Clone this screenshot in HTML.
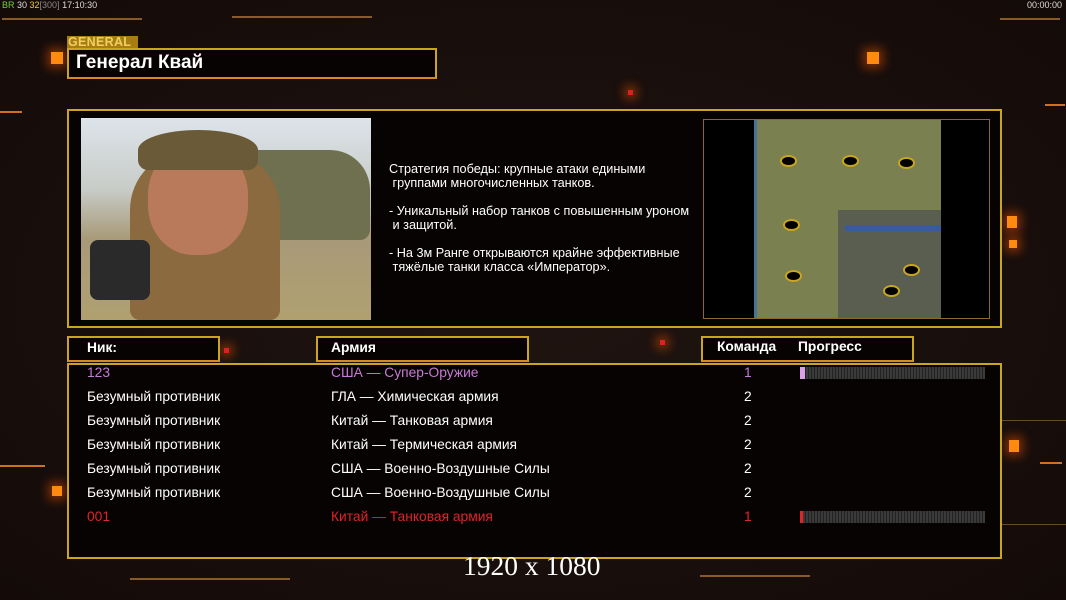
<!DOCTYPE html>
<html><head><meta charset="utf-8"><style>
*{margin:0;padding:0;box-sizing:border-box}
body{width:1066px;height:600px;overflow:hidden;background:#1b100d;font-family:"Liberation Sans",sans-serif;color:#fff;position:relative}
.a{position:absolute}
.box{position:absolute;border:2px solid #c9a61e;background:#070302}
.line{position:absolute;background:#8a5a2a;height:2px}
.sq{position:absolute;background:#ff8a10;box-shadow:0 0 10px 4px rgba(255,90,0,.45)}
.t{position:absolute;font-size:13.8px;white-space:nowrap}
.bar{position:absolute;height:12px;width:185px;background:repeating-linear-gradient(90deg,#3a3a3a 0 2px,#222 2px 3px)}
</style></head><body>
<div class="a" style="left:0;top:0;width:1066px;height:600px;background:radial-gradient(ellipse at 50% 50%,#1f1410,#140b09)"></div>
<div class="t" style="left:2px;top:0;font-size:9px;color:#ddd"><span style="color:#7c4">ВR</span> 30 <span style="color:#ec3">32</span><span style="color:#888">[300]</span> 17:10:30</div>
<div class="t" style="right:4px;top:0;font-size:9px;color:#ddd">00:00:00</div>
<div class="line" style="left:2px;top:18px;width:140px"></div>
<div class="line" style="left:232px;top:16px;width:140px"></div>
<div class="line" style="left:1000px;top:18px;width:60px"></div>
<div class="line" style="left:1045px;top:104px;width:20px;background:#d07020"></div>
<div class="line" style="left:0;top:111px;width:22px;background:#d07020"></div>
<div class="line" style="left:0;top:465px;width:45px;background:#d07020"></div>
<div class="line" style="left:1040px;top:462px;width:22px;background:#d07020"></div>
<div class="line" style="left:1000px;top:420px;width:66px;background:#6a4a2a;height:1px"></div>
<div class="line" style="left:700px;top:575px;width:110px"></div>
<div class="line" style="left:130px;top:578px;width:160px"></div>
<div class="line" style="left:1000px;top:524px;width:66px;background:#6a4a2a;height:1px"></div>
<div class="sq" style="left:51px;top:52px;width:12px;height:12px"></div>
<div class="sq" style="left:867px;top:52px;width:12px;height:12px"></div>
<div class="sq" style="left:1007px;top:216px;width:10px;height:12px"></div>
<div class="sq" style="left:1009px;top:240px;width:8px;height:8px"></div>
<div class="sq" style="left:1009px;top:440px;width:10px;height:12px"></div>
<div class="sq" style="left:52px;top:486px;width:10px;height:10px"></div>
<div class="sq" style="left:628px;top:90px;width:5px;height:5px;background:#e02020"></div>
<div class="sq" style="left:224px;top:348px;width:5px;height:5px;background:#e02020"></div>
<div class="sq" style="left:660px;top:340px;width:5px;height:5px;background:#e02020"></div>

<div class="a" style="left:67px;top:36px;width:71px;height:12px;background:#a87e12;color:#f0cf60;font-size:12.5px;font-weight:bold;line-height:12px;padding-left:1px;letter-spacing:.3px">GENERAL</div>
<div class="box" style="left:67px;top:48px;width:370px;height:31px;border-bottom-color:#d88a20"></div>
<div class="t" style="left:76px;top:52px;font-size:19px;font-weight:bold">Генерал Квай</div>

<div class="box" style="left:67px;top:109px;width:935px;height:219px"></div>
<div class="a" style="left:81px;top:118px;width:290px;height:202px;background:linear-gradient(180deg,#dde4ea 0%,#c8ccc8 35%,#a89a78 60%,#b0a070 100%)"></div>
<div class="a" style="left:200px;top:150px;width:170px;height:90px;background:#6f7050;border-radius:20px 40px 10px 10px"></div>
<div class="a" style="left:130px;top:150px;width:150px;height:170px;background:#8a6a3e;border-radius:60px 60px 10px 10px"></div>
<div class="a" style="left:148px;top:145px;width:100px;height:110px;background:#b87a5a;border-radius:45%"></div>
<div class="a" style="left:138px;top:130px;width:120px;height:40px;background:#6a5a38;border-radius:50% 50% 10px 10px"></div>
<div class="a" style="left:90px;top:240px;width:60px;height:60px;background:#2a2a2a;border-radius:8px"></div>
<div class="t" style="left:389px;top:162px;font-size:12.7px;line-height:14px;white-space:pre">Стратегия победы: крупные атаки едиными
 группами многочисленных танков.

- Уникальный набор танков с повышенным уроном
 и защитой.

- На 3м Ранге открываются крайне эффективные
 тяжёлые танки класса «Император».</div>
<div class="a" style="left:703px;top:119px;width:287px;height:200px;background:#000;border:1px solid #8a6a2a"></div>
<div class="a" style="left:754px;top:120px;width:187px;height:198px;background:linear-gradient(90deg,#4a70a0 0 3px,#7a8050 3px 100%)"></div>
<div class="a" style="left:838px;top:210px;width:103px;height:108px;background:#5a5e50"></div>
<div class="a" style="left:845px;top:225px;width:96px;height:6px;background:#3a5aa0"></div>
<div class="a" style="left:780px;top:155px;width:17px;height:12px;border-radius:50%;background:#000;border:2px solid #c9a61e"></div>
<div class="a" style="left:842px;top:155px;width:17px;height:12px;border-radius:50%;background:#000;border:2px solid #c9a61e"></div>
<div class="a" style="left:898px;top:157px;width:17px;height:12px;border-radius:50%;background:#000;border:2px solid #c9a61e"></div>
<div class="a" style="left:783px;top:219px;width:17px;height:12px;border-radius:50%;background:#000;border:2px solid #c9a61e"></div>
<div class="a" style="left:785px;top:270px;width:17px;height:12px;border-radius:50%;background:#000;border:2px solid #c9a61e"></div>
<div class="a" style="left:903px;top:264px;width:17px;height:12px;border-radius:50%;background:#000;border:2px solid #c9a61e"></div>
<div class="a" style="left:883px;top:285px;width:17px;height:12px;border-radius:50%;background:#000;border:2px solid #c9a61e"></div>

<div class="box" style="left:67px;top:336px;width:153px;height:26px;border-bottom-color:#d88a20"></div>
<div class="t" style="left:87px;top:340px;font-weight:bold">Ник:</div>
<div class="box" style="left:316px;top:336px;width:213px;height:26px;border-bottom-color:#d88a20"></div>
<div class="t" style="left:331px;top:340px;font-weight:bold">Армия</div>
<div class="box" style="left:701px;top:336px;width:213px;height:26px;border-bottom-color:#d88a20"></div>
<div class="t" style="left:717px;top:339px;font-weight:bold">Команда</div>
<div class="t" style="left:798px;top:339px;font-weight:bold">Прогресс</div>

<div class="box" style="left:67px;top:363px;width:935px;height:196px"></div>
<div class="t" style="left:87px;top:365px;color:#c77ad6">123</div>
<div class="t" style="left:331px;top:365px;color:#c77ad6">США — Супер-Оружие</div>
<div class="t" style="left:744px;top:365px;color:#c77ad6">1</div>
<div class="bar" style="left:800px;top:367px"></div><div class="a" style="left:800px;top:367px;width:5px;height:12px;background:#d9a0e6"></div>
<div class="t" style="left:87px;top:389px">Безумный противник</div><div class="t" style="left:331px;top:389px">ГЛА — Химическая армия</div><div class="t" style="left:744px;top:389px">2</div>
<div class="t" style="left:87px;top:413px">Безумный противник</div><div class="t" style="left:331px;top:413px">Китай — Танковая армия</div><div class="t" style="left:744px;top:413px">2</div>
<div class="t" style="left:87px;top:437px">Безумный противник</div><div class="t" style="left:331px;top:437px">Китай — Термическая армия</div><div class="t" style="left:744px;top:437px">2</div>
<div class="t" style="left:87px;top:461px">Безумный противник</div><div class="t" style="left:331px;top:461px">США — Военно-Воздушные Силы</div><div class="t" style="left:744px;top:461px">2</div>
<div class="t" style="left:87px;top:485px">Безумный противник</div><div class="t" style="left:331px;top:485px">США — Военно-Воздушные Силы</div><div class="t" style="left:744px;top:485px">2</div>
<div class="t" style="left:87px;top:509px;color:#e0242a">001</div>
<div class="t" style="left:331px;top:509px;color:#e0242a">Китай — Танковая армия</div>
<div class="t" style="left:744px;top:509px;color:#e0242a">1</div>
<div class="bar" style="left:800px;top:511px"></div><div class="a" style="left:800px;top:511px;width:3px;height:12px;background:#e0242a"></div>

<div class="t" style="left:463px;top:550px;font-family:'Liberation Serif',serif;font-size:27.5px">1920 x 1080</div>
</body></html>
